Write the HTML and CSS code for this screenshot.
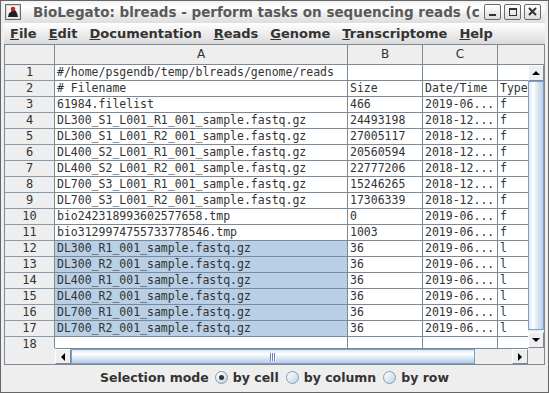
FILE: index.html
```html
<!DOCTYPE html>
<html>
<head>
<meta charset="utf-8">
<title>BioLegato</title>
<link rel="stylesheet" href="styles.css">
</head>
<body>
<div class="window">
  <div class="titlebar">
    <svg class="appicon" width="16" height="16" viewBox="0 0 16 16">
      <rect x="0.5" y="0.5" width="15" height="15" fill="#d8d8d8" stroke="#6a6a6a"/>
      <rect x="2" y="2" width="12" height="12" fill="#f4f4f4"/>
      <path d="M3 13 L4 9 L6 8 L7 6 L10 6 L12 9 L13 13 Z" fill="#222"/>
      <circle cx="8" cy="5" r="2.3" fill="#d42020"/>
    </svg>
    <div class="title">BioLegato: blreads - perform tasks on sequencing reads (c</div>
    <div class="tbtns">
      <div class="tbtn"><svg width="15" height="14" viewBox="0 0 15 14"><rect x="4" y="9" width="7" height="2" fill="#333"/></svg></div>
      <div class="tbtn"><svg width="15" height="14" viewBox="0 0 15 14"><rect x="4.5" y="3.5" width="7" height="7" fill="none" stroke="#333"/><rect x="4" y="3" width="8" height="2" fill="#333"/></svg></div>
      <div class="tbtn"><svg width="15" height="14" viewBox="0 0 15 14"><path d="M4 3 L11 10 M11 3 L4 10" stroke="#333" stroke-width="2"/></svg></div>
    </div>
  </div>
  <div class="menubar">
    <span class="menu"><u>F</u>ile</span>
    <span class="menu"><u>E</u>dit</span>
    <span class="menu"><u>D</u>ocumentation</span>
    <span class="menu"><u>R</u>eads</span>
    <span class="menu"><u>G</u>enome</span>
    <span class="menu"><u>T</u>ranscriptome</span>
    <span class="menu"><u>H</u>elp</span>
  </div>
  <div class="scrollpane">
    <div class="corner-tl"></div>
    <div class="colheader-vp">
      <div class="colheader">
        <div class="ch wa">A</div>
        <div class="ch wb">B</div>
        <div class="ch wc">C</div>
        <div class="ch wd"></div>
      </div>
    </div>
    <div class="corner-tr"></div>
    <div class="rowheader">
      <div class="rh">1</div><div class="rh">2</div><div class="rh">3</div><div class="rh">4</div>
      <div class="rh">5</div><div class="rh">6</div><div class="rh">7</div><div class="rh">8</div>
      <div class="rh">9</div><div class="rh">10</div><div class="rh">11</div><div class="rh">12</div>
      <div class="rh">13</div><div class="rh">14</div><div class="rh">15</div><div class="rh">16</div>
      <div class="rh">17</div><div class="rh">18</div>
    </div>
    <div class="viewport">
      <div class="grid">
        <div class="c">#/home/psgendb/temp/blreads/genome/reads</div><div class="c"></div><div class="c"></div><div class="c"></div>
        <div class="c"># Filename</div><div class="c">Size</div><div class="c">Date/Time</div><div class="c">Type</div>
        <div class="c">61984.filelist</div><div class="c">466</div><div class="c">2019-06...</div><div class="c">f</div>
        <div class="c">DL300_S1_L001_R1_001_sample.fastq.gz</div><div class="c">24493198</div><div class="c">2018-12...</div><div class="c">f</div>
        <div class="c">DL300_S1_L001_R2_001_sample.fastq.gz</div><div class="c">27005117</div><div class="c">2018-12...</div><div class="c">f</div>
        <div class="c">DL400_S2_L001_R1_001_sample.fastq.gz</div><div class="c">20560594</div><div class="c">2018-12...</div><div class="c">f</div>
        <div class="c">DL400_S2_L001_R2_001_sample.fastq.gz</div><div class="c">22777206</div><div class="c">2018-12...</div><div class="c">f</div>
        <div class="c">DL700_S3_L001_R1_001_sample.fastq.gz</div><div class="c">15246265</div><div class="c">2018-12...</div><div class="c">f</div>
        <div class="c">DL700_S3_L001_R2_001_sample.fastq.gz</div><div class="c">17306339</div><div class="c">2018-12...</div><div class="c">f</div>
        <div class="c">bio242318993602577658.tmp</div><div class="c">0</div><div class="c">2019-06...</div><div class="c">f</div>
        <div class="c">bio3129974755733778546.tmp</div><div class="c">1003</div><div class="c">2019-06...</div><div class="c">f</div>
        <div class="c sel">DL300_R1_001_sample.fastq.gz</div><div class="c">36</div><div class="c">2019-06...</div><div class="c">l</div>
        <div class="c sel">DL300_R2_001_sample.fastq.gz</div><div class="c">36</div><div class="c">2019-06...</div><div class="c">l</div>
        <div class="c sel">DL400_R1_001_sample.fastq.gz</div><div class="c">36</div><div class="c">2019-06...</div><div class="c">l</div>
        <div class="c sel">DL400_R2_001_sample.fastq.gz</div><div class="c">36</div><div class="c">2019-06...</div><div class="c">l</div>
        <div class="c sel">DL700_R1_001_sample.fastq.gz</div><div class="c">36</div><div class="c">2019-06...</div><div class="c">l</div>
        <div class="c sel">DL700_R2_001_sample.fastq.gz</div><div class="c">36</div><div class="c">2019-06...</div><div class="c">l</div>
        <div class="c"></div><div class="c"></div><div class="c"></div><div class="c"></div>
      </div>
    </div>
    <div class="vscroll">
      <div class="sbtn"><span class="arr up"></span></div>
      <div class="vthumb"></div>
      <div class="vtrack"></div>
      <div class="sbtn"><span class="arr down"></span></div>
    </div>
    <div class="corner-bl"></div>
    <div class="hscroll">
      <div class="sbtn"><span class="arr left"></span></div>
      <div class="hthumb"><span class="grip"></span></div>
      <div class="htrack"></div>
      <div class="sbtn"><span class="arr right"></span></div>
    </div>
    <div class="corner-br"></div>
  </div>
  <div class="selbar">
    <span class="sellabel">Selection mode</span>
    <span class="radio on"></span><span class="rlabel">by cell</span>
    <span class="radio"></span><span class="rlabel">by column</span>
    <span class="radio"></span><span class="rlabel">by row</span>
  </div>
</div>
</body>
</html>
```

FILE: styles.css
```css
html, body {
  margin: 0;
  padding: 0;
  background: #eeeeee;
}

.window {
  width: 549px;
  height: 393px;
  box-sizing: border-box;
  border: 1px solid #666666;
  background: #eeeeee;
  padding: 0 3px 3px 3px;
  display: flex;
  flex-direction: column;
  font-family: "DejaVu Sans", sans-serif;
  color: #333333;
  overflow: hidden;
}

/* title bar */
.titlebar {
  height: 22px;
  flex: none;
  display: flex;
  align-items: center;
  background: linear-gradient(to bottom, #f2f2f2 0%, #ffffff 30%, #eeeeee 60%, #dedede 100%);
}

.appicon {
  flex: none;
  margin-left: 1px;
  margin-right: 12px;
}

.title {
  flex: 1;
  min-width: 0;
  overflow: hidden;
  white-space: nowrap;
  font-weight: bold;
  font-size: 13.5px;
  color: #5a5a5a;
  margin-right: 4px;
}

.tbtns {
  flex: none;
  display: flex;
  gap: 3px;
  margin-right: 4px;
}

.tbtn {
  width: 17px;
  height: 16px;
  box-sizing: border-box;
  border: 1px solid #6a6a6a;
  border-radius: 2px;
  background: linear-gradient(to bottom, #ffffff, #dcdcdc);
  display: flex;
  align-items: center;
  justify-content: center;
}

/* menu bar */
.menubar {
  height: 21px;
  flex: none;
  display: flex;
  align-items: center;
  background: linear-gradient(to bottom, #ffffff, #dadada);
}

.menu {
  padding: 0 6px;
  font-weight: bold;
  font-size: 13px;
  color: #333333;
  white-space: nowrap;
}

.menu u {
  text-decoration: underline;
  text-underline-offset: 1px;
}

/* scroll pane */
.scrollpane {
  height: 321px;
  flex: none;
  box-sizing: border-box;
  border: 1px solid #7a8a99;
  display: grid;
  grid-template-columns: 50px 473px 16px;
  grid-template-rows: 20px 283px 16px;
  background: #eeeeee;
}

.corner-tl {
  box-sizing: border-box;
  border-right: 1px solid #7a8a99;
  border-bottom: 1px solid #7a8a99;
  background: #eeeeee;
}

.colheader-vp {
  overflow: hidden;
  background: #eeeeee;
}

.colheader {
  display: flex;
  width: 517px;
}

.ch {
  flex: none;
  height: 20px;
  box-sizing: border-box;
  border-right: 1px solid #7a8a99;
  border-bottom: 1px solid #7a8a99;
  text-align: center;
  font-size: 12px;
  line-height: 19px;
  color: #333333;
}

.wa { width: 293px; }
.wb { width: 75px; }
.wc { width: 75px; }
.wd { width: 74px; }

.corner-tr {
  box-sizing: border-box;
  border-bottom: 1px solid #7a8a99;
  background: #eeeeee;
}

.rowheader {
  overflow: hidden;
  background: #eeeeee;
}

.rh {
  height: 16px;
  box-sizing: border-box;
  border-bottom: 1px solid #8a9aa9;
  border-right: 1px solid #7a8a99;
  text-align: center;
  font-family: "DejaVu Sans Mono", monospace;
  font-size: 12px;
  line-height: 15px;
  color: #333333;
}

.viewport {
  overflow: hidden;
  background: #ffffff;
}

.grid {
  display: grid;
  grid-template-columns: 293px 75px 75px 74px;
  width: 517px;
}

.c {
  height: 16px;
  box-sizing: border-box;
  border-right: 1px solid #7a8a99;
  border-bottom: 1px solid #7a8a99;
  padding-left: 2px;
  font-family: "DejaVu Sans Mono", monospace;
  font-size: 11.5px;
  line-height: 15px;
  white-space: nowrap;
  overflow: hidden;
  color: #333333;
  background: #ffffff;
}

.c.sel {
  background: #b8cfe5;
}

/* scroll bars */
.vscroll {
  display: flex;
  flex-direction: column;
  background: #eeeeee;
}

.hscroll {
  display: flex;
  background: #eeeeee;
  border-top: 1px solid #7a8a99;
  box-sizing: border-box;
}

.sbtn {
  width: 16px;
  height: 16px;
  flex: none;
  box-sizing: border-box;
  border: 1px solid #7a8a99;
  border-top-color: #ffffff;
  border-left-color: #ffffff;
  background: #eeeeee;
  display: flex;
  align-items: center;
  justify-content: center;
}

.hscroll .sbtn {
  height: 15px;
}

.arr {
  width: 0;
  height: 0;
  border-style: solid;
}

.arr.up {
  border-width: 0 4px 4px 4px;
  border-color: transparent transparent #000 transparent;
}

.arr.down {
  border-width: 4px 4px 0 4px;
  border-color: #000 transparent transparent transparent;
}

.arr.left {
  border-width: 4px 4px 4px 0;
  border-color: transparent #000 transparent transparent;
}

.arr.right {
  border-width: 4px 0 4px 4px;
  border-color: transparent transparent transparent #000;
}

.vthumb {
  height: 249px;
  flex: none;
  box-sizing: border-box;
  border: 1px solid #7f9cc4;
  background: linear-gradient(to right, #dde8f3 0%, #ffffff 30%, #dde8f3 60%, #b8cfe5 100%);
}

.vtrack {
  flex: 1;
  background: #eeeeee;
}

.hthumb {
  width: 404px;
  flex: none;
  box-sizing: border-box;
  border: 1px solid #7f9cc4;
  background: linear-gradient(to bottom, #dde8f3 0%, #ffffff 30%, #dde8f3 60%, #b8cfe5 100%);
  display: flex;
  align-items: center;
  justify-content: center;
}

.grip {
  width: 6px;
  height: 8px;
  background: repeating-linear-gradient(to right, #6382bf 0px, #6382bf 1px, #ffffff 1px, #ffffff 2px);
}

.htrack {
  flex: 1;
  background: #eeeeee;
}

.corner-bl, .corner-br {
  background: #eeeeee;
}

/* selection bar */
.selbar {
  height: 24px;
  flex: none;
  display: flex;
  align-items: center;
  justify-content: center;
  font-weight: bold;
  font-size: 12.5px;
  color: #333333;
  white-space: nowrap;
}

.sellabel {
  margin-right: 6px;
}

.radio {
  width: 13px;
  height: 13px;
  box-sizing: border-box;
  border-radius: 50%;
  border: 1px solid #8a9aab;
  background: linear-gradient(135deg, #ffffff 0%, #dde8f3 55%, #b8cfe5 100%);
  display: inline-flex;
  align-items: center;
  justify-content: center;
  margin-right: 5px;
}

.radio.on::after {
  content: "";
  width: 5px;
  height: 5px;
  border-radius: 50%;
  background: #333333;
}

.rlabel {
  margin-right: 7px;
}

.rlabel:last-child {
  margin-right: 0;
}
```
